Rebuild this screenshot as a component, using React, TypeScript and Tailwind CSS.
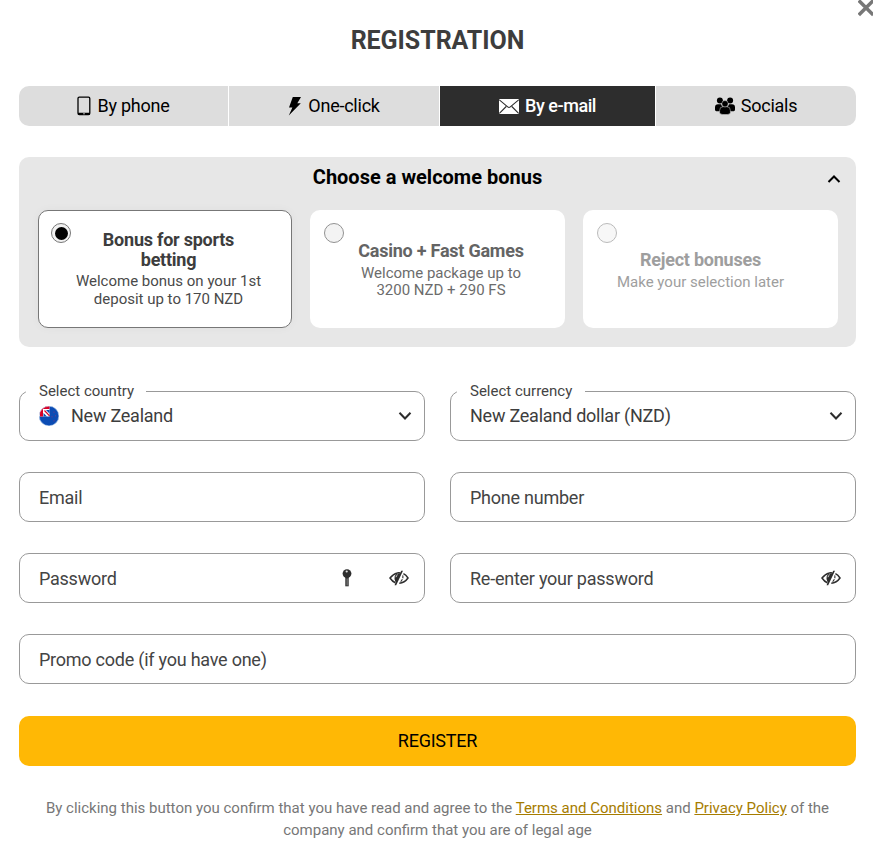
import type { ReactNode } from 'react';

const PhoneIcon = () => (
  <svg width="14" height="20" viewBox="0 0 14 20" className="shrink-0">
    <rect x="1" y="1.200" width="11.800" height="17.300" rx="1.300" fill="none" stroke="#000" strokeWidth="1.300" />
    <path d="M1 16.700h12v1.300q0 1-1.200 1H2.200Q1 19 1 18z" />
    <circle cx="7" cy="17.700" r=".7" fill="#ddd" />
  </svg>
);

const BoltIcon = () => (
  <svg width="14" height="20" viewBox="0 0 14 20" className="shrink-0">
    <path d="M4.800 1h8.200L9.300 7.300h3.500L.8 19.500l3.600-8H1z" />
  </svg>
);

const MailIcon = () => (
  <svg width="20" height="15" viewBox="0 0 20 15" className="shrink-0">
    <rect width="20" height="15" rx="1" fill="#fff" />
    <path d="M.3.8 8.700 7.900q1.300 1 2.600 0L19.700.8M.4 14.300l6.800-6.800M19.600 14.300l-6.800-6.800" fill="none" stroke="#2d2d2d" strokeWidth="1.100" />
  </svg>
);

const GroupIcon = () => (
  <svg width="20" height="18" viewBox="0 0 20 18" className="shrink-0">
    <circle cx="4.900" cy="3.600" r="3" />
    <circle cx="15.100" cy="3.600" r="3" />
    <path d="M0 12.500V10.500Q0 7.200 3 7.200h3l2 4-2.500 3H1.300Q0 14 0 12.500zM20 12.500V10.500Q20 7.200 17 7.200h-3l-2 4 2.500 3h4.200Q20 14 20 12.500z" />
    <path d="M4.600 15.400V13.600Q4.600 9.700 8 9.700h4q3.400 0 3.400 3.900v1.800q0 2.200-5.400 2.200t-5.400-2.200z" stroke="#ddd" strokeWidth=".5" />
    <circle cx="10" cy="6.700" r="3.200" stroke="#ddd" strokeWidth=".5" />
  </svg>
);

const EyeOffIcon = () => (
  <svg width="20" height="16" viewBox="0 0 20 16" className="shrink-0">
    <path d="M11.300 2.900Q9.800 2.500 8.300 2.900 4 3.900 1 8q2.500 3.700 5.300 4.700M14.400 3.700Q17 5 19 8q-3.500 5-8.700 5.200" fill="none" stroke="#2d2d2d" strokeWidth="1.500" />
    <path d="M12.200.7h1.800L7.200 15.300H5.600l1-3Q4.800 9.300 5.700 6.200 6.800 3.400 11 3.200z" fill="#2d2d2d" />
    <path d="M7 7.200q.2-1.800 1.700-2.500" fill="none" stroke="#fff" strokeWidth=".8" />
    <path d="M13.700 5.300q.8 2.500-1 5l-1.400 2" fill="none" stroke="#2d2d2d" strokeWidth="1.100" strokeDasharray="3 1" />
  </svg>
);

const KeyIcon = () => (
  <svg width="10" height="18" viewBox="0 0 10 18" className="shrink-0">
    <circle cx="5" cy="4.600" r="4.400" fill="#2d2d2d" />
    <path d="M3.300 8h3.400v9.300H3.300z" fill="#2d2d2d" />
    <circle cx="4.700" cy="2.500" r="1.100" fill="#ddd" />
    <path d="M5.100 9.500v7" stroke="#aaa" strokeWidth=".8" />
  </svg>
);

const Chevron = ({ up = false }: { up?: boolean }) => (
  <svg width="14" height="10" viewBox="0 0 14 10" className="shrink-0">
    <path d={up ? 'M1.500 8 7 2.500 12.500 8' : 'M1.500 1.800 7 7.500 12.500 1.800'} fill="none" stroke={up ? '#000' : '#2d2d2d'} strokeWidth="2" />
  </svg>
);

const FlagIcon = () => (
  <svg width="20" height="20" viewBox="0 0 20 20" className="shrink-0">
    <defs>
      <clipPath id="flag-round"><circle cx="10" cy="10" r="10" /></clipPath>
    </defs>
    <g clipPath="url(#flag-round)">
      <path d="M0 0h20v20H0z" fill="#0b4cb4" />
      <path d="M0 0h10.500v10.500H0z" fill="#fff" />
      <path d="M0 0h10.500v3H4v7.500H1z" fill="#d80027" />
      <path d="M5.500 4.500 10.500 9.800" stroke="#d80027" strokeWidth="1.200" />
      <path d="M7 4h3.500v3.500zM4.500 7v3.500H8z" fill="#0b4cb4" />
      <path d="M15 5.500v1.500M13 10v1.500M16.500 9v1.500M15 14v1.500" stroke="#6a3a8a" strokeWidth=".8" />
    </g>
    <circle cx="10" cy="10" r="9.800" fill="none" stroke="#d8e8f6" strokeWidth=".5" />
  </svg>
);

function Radio({ checked = false, className }: { checked?: boolean; className: string }) {
  return (
    <span className={`absolute top-[13px] flex h-5 w-5 items-center justify-center rounded-full border border-[#777] bg-[#f1f1f1] ${className}`}>
      {checked && <span className="h-[13px] w-[13px] rounded-full bg-black" />}
    </span>
  );
}

interface BonusProps {
  title: ReactNode;
  text: ReactNode;
  className: string;
  textClass: string;
  radioClass: string;
  checked?: boolean;
}

function Bonus({ title, text, className, textClass, radioClass, checked }: BonusProps) {
  return (
    <div className="relative">
      <div className={`h-[118px] rounded-[10px] bg-white text-center ${className}`}>
        <h3 className="text-[18px] leading-5 font-bold tracking-[-0.240px]">{title}</h3>
        <p className={`text-[15px] ${textClass}`}>{text}</p>
      </div>
      <Radio checked={checked} className={radioClass} />
    </div>
  );
}

function Field({ label, children }: { label: string; children?: ReactNode }) {
  return (
    <div className="flex h-[50px] items-center rounded-[10px] border border-[#999] pl-[19px] text-[18px] tracking-[-0.240px] text-[#444]">
      <span className="grow">{label}</span>
      {children}
    </div>
  );
}

function Select({ label, value, gap, icon }: { label: string; value: string; gap: string; icon?: ReactNode }) {
  return (
    <div className="relative flex h-[50px] items-center rounded-[10px] border border-[#999] pr-3 pl-[19px] text-[18px] text-[#3d3d3d]">
      <span className={`absolute -top-[11px] left-[6px] bg-white pl-[13px] text-[15px] leading-5 text-[#444] ${gap}`}>{label}</span>
      {icon}
      <span className="grow pb-[2px] tracking-[-0.240px]">{value}</span>
      <Chevron />
    </div>
  );
}

export default function App() {
  return (
    <main className="relative h-[856px] w-[873px] overflow-hidden bg-white pt-[20px] pr-[17px] pl-[19px] font-['Roboto',sans-serif]">
      <svg className="absolute top-0 left-[858px]" width="15" height="17" viewBox="0 0 15 17">
        <path d="M.8.500 15.300 15M.8 15 15.300.500" stroke="#777" strokeWidth="3.500" />
      </svg>
      <h1 className="h-[66px] text-center text-[25px] leading-[41px] font-bold tracking-[-0.050px] text-[#3d3d3d]">REGISTRATION</h1>

      <nav className="grid h-10 grid-cols-[209px_210px_215px_200px] gap-px overflow-hidden rounded-[10px] text-[18px] tracking-[-0.240px] text-black">
        <div className="flex items-center justify-center bg-[#ddd]"><PhoneIcon /><span className="ml-[6px] pb-[2px]">By phone</span></div>
        <div className="flex items-center justify-center bg-[#ddd]"><BoltIcon /><span className="ml-[6px] pb-[2px]">One-click</span></div>
        <div className="flex items-center justify-center bg-[#2d2d2d] font-medium text-white"><MailIcon /><span className="ml-[6px] pb-[2px] tracking-[-0.450px]">By e-mail</span></div>
        <div className="flex items-center justify-center bg-[#ddd]"><GroupIcon /><span className="ml-[6px] pb-[2px]">Socials</span></div>
      </nav>

      <section className="mt-[31px] h-[190px] rounded-[10px] bg-[#e7e7e7] px-[19px]">
        <header className="relative flex h-[53px] justify-center pt-[6px] pr-[20px]">
          <h2 className="text-[20px] leading-[28px] font-bold text-black">Choose a welcome bonus</h2>
          <span className="absolute top-[17px] right-[-4px] leading-none"><Chevron up /></span>
        </header>
        <div className="grid grid-cols-[254px_255px_255px] gap-[18px]">
          <Bonus
            checked
            title={<>Bonus for sports<br />betting</>}
            text={<>Welcome bonus on your 1st<br />deposit up to 170 NZD</>}
            className="border border-[#777] pt-[19px] pl-[7px] text-[#3d3d3d] shadow-[0_0_10px_rgba(0,0,0,0.04)]"
            textClass="mt-[2px] leading-[18px] text-[#4a4a4a]"
            radioClass="left-[13px]"
          />
          <Bonus
            title="Casino + Fast Games"
            text={<>Welcome package up to<br />3200 NZD + 290 FS</>}
            className="pt-[31px] pl-[7px] text-[#646464]"
            textClass="mt-[4px] leading-[17px] text-[#6c6c6c]"
            radioClass="left-[14px] opacity-80"
          />
          <Bonus
            title="Reject bonuses"
            text="Make your selection later"
            className="pt-[40px] pr-[20px] text-[#9e9e9e]"
            textClass="mt-[4px] leading-[17px]"
            radioClass="left-[14px] opacity-50"
          />
        </div>
      </section>

      <form className="mt-[44px] grid grid-cols-2 gap-x-[25px] gap-y-[31px]">
        <Select label="Select country" value="New Zealand" gap="pr-[12px]" icon={<span className="mr-[12px]"><FlagIcon /></span>} />
        <Select label="Select currency" value="New Zealand dollar (NZD)" gap="pr-[13px]" />
        <Field label="Email" />
        <Field label="Phone number" />
        <Field label="Password">
          <span className="mr-[37px]"><KeyIcon /></span>
          <span className="mr-[15px]"><EyeOffIcon /></span>
        </Field>
        <Field label="Re-enter your password">
          <span className="mr-[14px]"><EyeOffIcon /></span>
        </Field>
        <div className="col-span-2"><Field label="Promo code (if you have one)" /></div>
      </form>
      <button className="mt-8 h-[50px] w-full rounded-[10px] bg-[#ffb805] pb-[2px] text-[18px] tracking-[-0.240px] text-black">REGISTER</button>
      <p className="mt-[31px] text-center text-[15px] leading-[22px] text-[#777]">
        By clicking this button you confirm that you have read and agree to the <a className="text-[#a67c00] underline">Terms and Conditions</a> and <a className="text-[#a67c00] underline">Privacy Policy</a> of the<br />company and confirm that you are of legal age
      </p>
    </main>
  );
}
